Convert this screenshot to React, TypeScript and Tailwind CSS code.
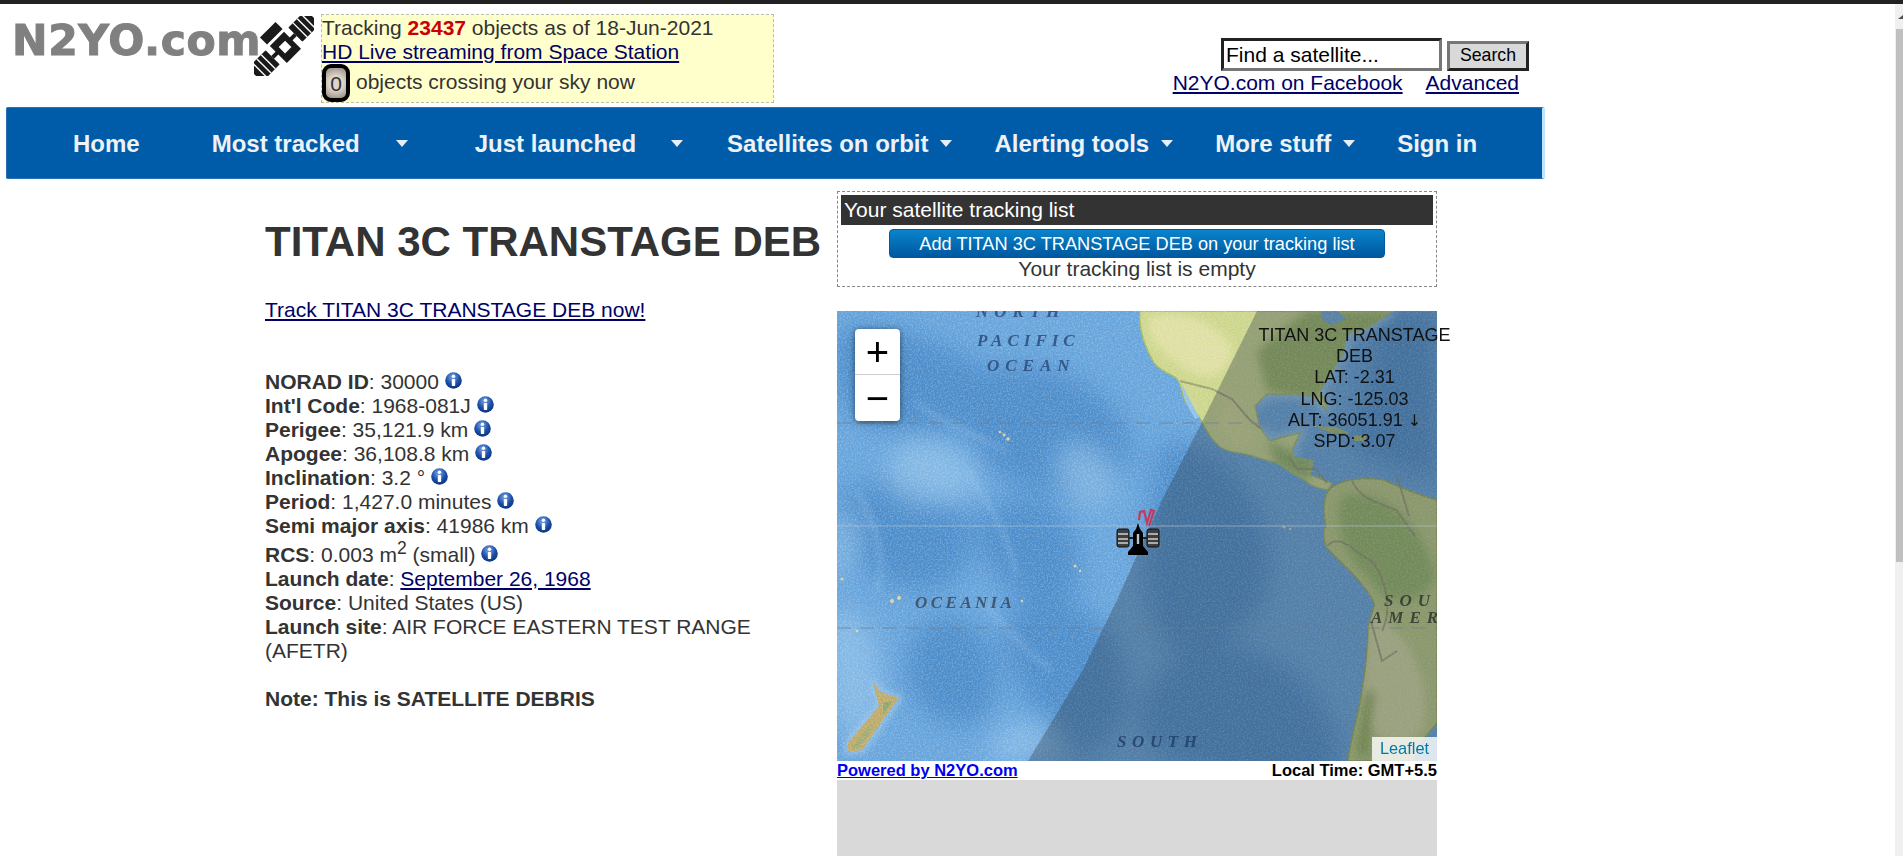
import React from "react";

const F = "[font-family:'Liberation_Sans',Arial,sans-serif]";

function Info() {
  return (
    <svg width="17" height="17" viewBox="0 0 17 17" className="inline-block ml-[6px] align-[0px]">
      <defs>
        <radialGradient id="ig" cx="45%" cy="30%" r="75%">
          <stop offset="0%" stopColor="#7fa8e8" />
          <stop offset="55%" stopColor="#1c4fa8" />
          <stop offset="100%" stopColor="#0b2f78" />
        </radialGradient>
      </defs>
      <circle cx="8.5" cy="8.5" r="8.3" fill="url(#ig)" />
      <circle cx="8.5" cy="4.3" r="1.7" fill="#fff" />
      <rect x="6.8" y="7" width="3.4" height="7" rx="0.8" fill="#fff" />
    </svg>
  );
}

function Caret({ className }: { className: string }) {
  return (
    <svg width="12" height="7" viewBox="0 0 12 7" className={className}>
      <path d="M0 0H12L6 7Z" fill="#e8eef5" />
    </svg>
  );
}

function Logo() {
  return (
    <svg width="60" height="60" viewBox="0 0 60 60" className="shrink-0">
      <g transform="translate(30 30) rotate(-45)" fill="#1a1a1a">
        <rect x="-41" y="-10" width="25" height="20" rx="1" />
        <rect x="16" y="-10" width="25" height="20" rx="1" />
        <rect x="-16" y="-2" width="8" height="4" />
        <rect x="8" y="-2" width="8" height="4" />
        <path d="M-10 -10H10V14H-10Z" />
        <path d="M-11 -23H11V-13H-11Z" />
        <rect x="-4.5" y="-3" width="9" height="9" fill="#fff" />
        <g fill="#fff">
          <rect x="-35" y="-10" width="1.4" height="20" />
          <rect x="-29" y="-10" width="1.4" height="20" />
          <rect x="-23" y="-10" width="1.4" height="20" />
          <rect x="22" y="-10" width="1.4" height="20" />
          <rect x="28" y="-10" width="1.4" height="20" />
          <rect x="34" y="-10" width="1.4" height="20" />
        </g>
      </g>
    </svg>
  );
}

const NA = "M303 0C301 20 309 38 317 52C325 62 336 63 341 69C346 78 345 86 349 92C356 98 362 104 365 111C370 122 376 130 383 136C394 143 402 141 412 144C424 148 432 150 440 152C448 158 460 165 467 169C475 176 482 178 491 179L495 172L484 168L473 164L476 150L456 146L456 137L463 122L450 125L433 130L423 117L418 95L430 83L453 83L476 85L483 92L491 100L483 80L493 63L506 43L510 23L530 17L556 0Z";
const SA = "M491 180C500 170 520 165 547 169C562 176 582 184 600 189V412C590 425 580 432 577 450H511C513 430 520 410 524 385C530 350 531 330 531 316C535 300 538 295 537 292C528 272 510 258 489 236C486 225 486 218 489 216C486 200 486 190 491 180Z";

function MapArt() {
  return (
    <svg viewBox="0 0 600 450" width="600" height="450" className="block">
      <defs>
        <filter id="speck" x="0" y="0" width="100%" height="100%">
          <feTurbulence type="fractalNoise" baseFrequency="0.6" numOctaves="2" seed="4" />
          <feColorMatrix values="0 0 0 0 1  0 0 0 0 1  0 0 0 0 1  1.8 0 0 0 -0.7" />
        </filter>
        <filter id="bl"><feGaussianBlur stdDeviation="13" /></filter>
        <filter id="bs"><feGaussianBlur stdDeviation="4" /></filter>
        <filter id="bm"><feGaussianBlur stdDeviation="3" /></filter>
        <filter id="b1"><feGaussianBlur stdDeviation="0.6" /></filter>
        <clipPath id="mapc"><rect width="600" height="450" /></clipPath>
        <clipPath id="landc"><path d={NA} /><path d={SA} /></clipPath>
      </defs>
      <g clipPath="url(#mapc)">
        <rect width="600" height="450" fill="#66a4dc" />
        <g filter="url(#bl)" fill="#3f82c3" opacity="0.7">
          <path d="M0 20C50 10 120 30 160 70S120 130 60 120S-10 70 0 20Z" />
          <path d="M140 60C200 40 270 70 290 120S260 190 200 180S110 110 140 60Z" />
          <path d="M40 170C90 160 150 200 130 250S40 280 10 240S0 180 40 170Z" />
          <path d="M170 190C220 180 250 220 240 270S170 290 150 250S140 200 170 190Z" />
          <path d="M90 310C120 290 170 330 160 380S100 420 80 390S70 330 90 310Z" />
          <path d="M190 290C240 280 300 320 280 380S200 420 180 370S160 310 190 290Z" />
          <path d="M340 130C390 140 420 180 430 230S420 320 370 340S300 290 310 220S310 130 340 130Z" />
          <path d="M350 340C410 320 480 360 500 430S400 470 340 450S300 370 350 340Z" />
          <path d="M540 0H600V170C570 160 530 150 510 130C530 90 530 40 540 0Z" />
          <path d="M270 340C300 370 300 420 240 450H190Z" />
        </g>
        <g filter="url(#bl)" fill="#9ecbee" opacity="0.55">
          <path d="M70 130C120 120 170 170 120 190S20 170 70 130Z" />
          <path d="M230 130C270 130 300 170 270 190S200 160 230 130Z" />
          <path d="M-10 300C30 290 50 340 40 400S-20 430 -10 300Z" />
          <path d="M160 420C200 400 240 420 230 450H150Z" />
          <path d="M0 200C30 190 30 240 10 260S-10 230 0 200Z" />
        </g>
        <g fill="none" stroke="#bcdcf3" strokeWidth="4" opacity="0.28" filter="url(#bm)">
          <path d="M78 90C100 110 130 120 170 140" />
          <path d="M20 180C40 215 50 250 40 280" />
          <path d="M130 160C150 190 170 220 180 265" />
          <path d="M150 295C170 320 190 340 215 360" />
        </g>
        <g fill="none" stroke="#a9d2ef" strokeWidth="9" opacity="0.7" filter="url(#bs)">
          <path d="M418 95L430 83L453 83L476 85L483 92L491 100L483 80L493 63L506 43L510 23L530 17L556 0" />
          <path d="M423 117L433 130L450 125L463 122L456 137L456 146" />
        </g>
        <path d={NA} fill="#ccd68a" />
        <path d={SA} fill="#bcc97c" />
        <g clipPath="url(#landc)">
          <g filter="url(#bs)">
            <path d="M312 6C340 -4 385 10 396 40C392 62 370 74 348 58C325 40 308 30 312 6Z" fill="#e0e0a4" opacity="0.9" />
            <path d="M470 0H560L500 60L480 90L430 80L420 40Z" fill="#92ad58" opacity="0.9" />
            <path d="M395 80L420 130L400 140L380 110Z" fill="#d8d890" opacity="0.7" />
            <path d="M430 130L480 150L470 170L440 155Z" fill="#8aaa58" opacity="0.85" />
            <path d="M505 185C540 175 585 205 598 265C585 300 545 295 530 265C508 245 495 210 505 185Z" fill="#90b05c" opacity="0.85" />
            <path d="M532 300C560 310 600 360 585 420C560 445 528 430 526 380Z" fill="#dadba0" opacity="0.8" />
            <path d="M520 440L530 380L538 380L530 450Z" fill="#8fa84e" />
          </g>
        </g>
        <path d={NA} fill="none" stroke="#9cb866" strokeWidth="1.4" filter="url(#b1)" />
        <path d={SA} fill="none" stroke="#98a856" strokeWidth="1.4" filter="url(#b1)" />
        <path d="M344 72L362 106L358 108L349 92Z" fill="#8fc2ea" />
        <path d="M484 0H500L510 8L494 14L484 8Z" fill="#6ea7d4" />
        <path d="M476 115L498 116L513 122L495 122Z" fill="#a6b56a" />
        <path d="M516 125L530 124L528 130L518 130Z" fill="#a6b56a" />
        <g fill="none" stroke="#8f8a6a" strokeWidth="2" opacity="0.7" filter="url(#b1)">
          <path d="M343 70L375 78L395 88L412 108L423 117" />
          <path d="M452 146L460 158L478 158L490 172" />
          <path d="M515 170C525 190 540 190 560 200L578 225" />
          <path d="M490 235C505 220 520 245 535 250C550 270 555 300 545 320" />
          <path d="M534 310L545 350L560 340" />
          <path d="M560 165L572 205" />
        </g>
        <path d="M36 371L44 381L62 387L48 406L44 412L25 439L11 441L11 432L33 406L42 395Z" fill="#a9d0ee" opacity="0.5" stroke="#a9d0ee" strokeWidth="7" filter="url(#bm)" />
        <path d="M36 371L44 381L62 387L48 406L44 412L25 439L11 441L11 432L33 406L42 395Z" fill="#bda968" />
        <path d="M46 392L56 390L46 404Z" fill="#8fa66e" />
        <path d="M15 436L30 418L38 410L32 424L20 438Z" fill="#9eab70" />
        <g fill="#e2cf9a">
          <circle cx="171" cy="128" r="1.8" /><circle cx="167" cy="124" r="1.4" /><circle cx="163" cy="121" r="1.2" />
          <circle cx="238" cy="255" r="1.5" /><circle cx="243" cy="260" r="1.2" /><circle cx="447" cy="216" r="1.5" /><circle cx="453" cy="218" r="1.3" />
          <circle cx="55" cy="290" r="2" /><circle cx="62" cy="287" r="2" /><circle cx="5" cy="268" r="1.5" />
          <circle cx="20" cy="320" r="1.3" /><circle cx="185" cy="290" r="1.2" />
        </g>
        <rect width="600" height="450" filter="url(#speck)" opacity="0.32" />
        <path d="M420 0L365 111L325 189L280 289L246 359L191 450H600V0Z" fill="#2f3c4a" opacity="0.35" />
        <g fontFamily="'Liberation Serif', serif" fontStyle="italic" fontWeight="700" fontSize="17" fill="#2c4c7c" opacity="0.85">
          <text x="139" y="6" letterSpacing="6">NORTH</text>
          <text x="140" y="35" letterSpacing="5">PACIFIC</text>
          <text x="150" y="60" letterSpacing="6">OCEAN</text>
          <text x="78" y="297" fill="#3a4a5c" letterSpacing="3.4">OCEANIA</text>
          <text x="280" y="436" fill="#21406a" letterSpacing="5.6">SOUTH</text>
          <text x="547" y="295" fill="#2f382c" letterSpacing="6">SOUTH</text>
          <text x="534" y="312" fill="#2f382c" letterSpacing="6">AMERICA</text>
        </g>
        <g stroke="#6f7f8f" strokeWidth="1.2" strokeDasharray="14 9" opacity="0.75">
          <path d="M0 112H600" />
          <path d="M0 317H600" />
        </g>
        <path d="M0 215H600" stroke="#b9c8d4" strokeWidth="1" opacity="0.6" />
        <g transform="translate(301 227)">
          <path d="M-2 -9L0 -15L2 -9L5 -5V8L10 14V17H-10V14L-5 8V-5Z" fill="#000" />
          <rect x="-21" y="-9" width="12" height="18" rx="2" fill="#3e3e3e" stroke="#111" />
          <rect x="9" y="-9" width="12" height="18" rx="2" fill="#3e3e3e" stroke="#111" />
          <path d="M-20 -4H-10M-20 1H-10M-20 5H-10M10 -4H20M10 1H20M10 5H20" stroke="#cfcfcf" strokeWidth="1.3" />
          <path d="M-9 0H-5M5 0H9" stroke="#222" strokeWidth="2" />
          <rect x="-1.2" y="-4" width="2.4" height="10" fill="#b9c4cc" />
          <path d="M1 -18L2 -26L6 -27L9 -15L13 -28L16 -27L11 -12" fill="none" stroke="#c23a5e" strokeWidth="2.2" />
        </g>
      </g>
    </svg>
  );
}

function NavLink({ children, className }: { children: React.ReactNode; className: string }) {
  return <a className={`font-bold text-[24px] text-[#eef2f7] whitespace-nowrap ${className}`}>{children}</a>;
}

function Row({ label, children, info = true }: { label: string; children: React.ReactNode; info?: boolean }) {
  return (
    <div>
      <b>{label}</b>: {children}
      {info && <Info />}
    </div>
  );
}

export default function App() {
  return (
    <div className={`h-[856px] w-full overflow-hidden bg-white flex flex-col text-[21px] text-[#333] ${F}`}>
      <div className="h-1 shrink-0 bg-[#222]" />
      <div className="flex flex-1 min-h-0">
        <div className="flex-1 min-w-0">
          <div className="w-[1543px] h-[103px] flex relative">
            <div className="flex items-start w-[321px] shrink-0">
              <span className="[font-family:'DejaVu_Sans',sans-serif] font-bold text-[42.5px] leading-none text-[#808080] [-webkit-text-stroke:1px_#808080] ml-[12px] mt-[16px] w-[242px] tracking-[0.6px] whitespace-nowrap blur-[0.5px]">N2YO.com</span>
              <div className="mt-[12px]"><Logo /></div>
            </div>
            <div className="w-[453px] h-[89px] mt-[10px] bg-[#ffffcc] border border-dashed border-[#bbb] leading-[25px]">
              <div>Tracking <b className="text-[#cc0000]">23437</b> objects as of 18-Jun-2021</div>
              <a className="underline text-[#000066] block -mt-[1px]">HD Live streaming from Space Station</a>
              <div className="flex items-center">
                <span className="w-[28px] h-[38px] border-[4px] border-black rounded-[9px] bg-[radial-gradient(circle,#ddd5cb_40%,#8f847c)] flex items-center justify-center text-[#333] mr-[6px]">0</span>
                <span className="-mt-[3px]">objects crossing your sky now</span>
              </div>
            </div>
            <div className="ml-auto pr-[14px] flex flex-col items-end">
              <div className="flex items-end mt-[34px] gap-[5px]">
                <div className="w-[221px] h-[33px] border-[3px] border-t-[#222] border-l-[#222] border-r-[#767676] border-b-[#767676] text-black flex items-center pl-[2px]">Find a satellite...</div>
                <button className="w-[82px] h-[30px] border-[3px] border-t-[#767676] border-l-[#767676] border-r-[#222] border-b-[#222] bg-[#d9d9d9] text-[17.7px] text-black leading-none">Search</button>
              </div>
              <div className="flex gap-[23px] pr-[10px] text-[#000066] leading-[24px]">
                <a className="underline">N2YO.com on Facebook</a>
                <a className="underline">Advanced</a>
              </div>
            </div>
          </div>

          <div className="ml-[6px] w-[1539px] h-[72px] bg-[#005ca8] rounded-[2px] border border-[#2a72b5] border-r-[3px] border-r-[#c0e4ff] pt-[1px] flex items-center">
            <NavLink className="ml-[66px]">Home</NavLink>
            <NavLink className="ml-[72px]">Most tracked</NavLink>
            <Caret className="ml-[36px]" />
            <NavLink className="ml-[67px]">Just launched</NavLink>
            <Caret className="ml-[35px]" />
            <NavLink className="ml-[44px]">Satellites on orbit</NavLink>
            <Caret className="ml-[12px]" />
            <NavLink className="ml-[42px]">Alerting tools</NavLink>
            <Caret className="ml-[12px]" />
            <NavLink className="ml-[42px]">More stuff</NavLink>
            <Caret className="ml-[12px]" />
            <NavLink className="ml-[42px]">Sign in</NavLink>
          </div>

          <div className="flex">
            <div className="w-[837px] shrink-0 pl-[265px] pr-[16px]">
              <h1 className="text-[42px] font-bold leading-[46px] mt-[40px] whitespace-nowrap">TITAN 3C TRANSTAGE DEB</h1>
              <a className="block underline text-[#000066] leading-[24px] mt-[33px]">Track TITAN 3C TRANSTAGE DEB now!</a>
              <div className="leading-[24px] mt-[48px]">
                <Row label="NORAD ID">30000</Row>
                <Row label="Int'l Code">1968-081J</Row>
                <Row label="Perigee">35,121.9 km</Row>
                <Row label="Apogee">36,108.8 km</Row>
                <Row label="Inclination">3.2 °</Row>
                <Row label="Period">1,427.0 minutes</Row>
                <Row label="Semi major axis">41986 km</Row>
                <div className="pt-[5px]">
                  <b>RCS</b>: 0.003 m<sup className="text-[17.5px] leading-none align-baseline relative -top-[8px]">2</sup> (small)<Info />
                </div>
                <Row label="Launch date" info={false}><a className="underline text-[#000066]">September 26, 1968</a></Row>
                <Row label="Source" info={false}>United States (US)</Row>
                <Row label="Launch site" info={false}>AIR FORCE EASTERN TEST RANGE (AFETR)</Row>
                <div className="mt-[24px] font-bold">Note: This is SATELLITE DEBRIS</div>
              </div>
            </div>

            <div className="w-[600px] shrink-0 flex flex-col">
              <div className="mt-[12px] h-[96px] border border-dashed border-[#888] px-[3px] pt-[3px] text-center">
                <div className="h-[30px] bg-[#333] text-white text-left pl-[3px] leading-[30px]">Your satellite tracking list</div>
                <button className="block mx-auto mt-[4px] w-[496px] h-[29px] rounded-[4px] border border-[#005a9e] bg-gradient-to-b from-[#0a84cc] to-[#00589f] text-white text-[18.2px] leading-none pt-[2px]">Add TITAN 3C TRANSTAGE DEB on your tracking list</button>
                <div className="leading-[24px] -mt-[1px]">Your tracking list is empty</div>
              </div>
              <div className="mt-[24px] h-[450px] relative">
                <MapArt />
                <div className="absolute left-[18px] top-[18px] w-[45px] h-[92px] bg-white rounded-[4px] shadow-[0_1px_6px_rgba(0,0,0,0.55)] flex flex-col text-black">
                  <div className="h-[46px] border-b border-[#ccc] flex items-center justify-center text-[40px] font-normal leading-none">+</div>
                  <div className="flex-1 flex items-center justify-center text-[40px] leading-none">−</div>
                </div>
                <div className="absolute left-[421px] top-[14px] w-[193px] text-center text-[18px] leading-[21.2px] text-[#111]">
                  TITAN 3C TRANSTAGE DEB<br />LAT: -2.31<br />LNG: -125.03<br />ALT: 36051.91 <span className="[font-family:'DejaVu_Sans',sans-serif] text-[16px] leading-none">↓</span><br />SPD: 3.07
                </div>
                <div className="absolute right-0 bottom-0 h-[24px] w-[65px] bg-white/80 text-[16.4px] leading-[23px] text-center text-[#0078a8]">Leaflet</div>
              </div>
              <div className="h-[19px] flex justify-between items-start text-[16.5px] font-bold text-black leading-[18px]">
                <a className="underline text-[#0000ee]">Powered by N2YO.com</a>
                <span>Local Time: GMT+5.5</span>
              </div>
              <div className="h-[100px] bg-[#d9d9d9]" />
            </div>
          </div>
        </div>

        <div className="w-2 shrink-0 bg-[#f0f0f0] pl-px flex flex-col">
          <div className="h-[25px] flex items-center justify-end">
            <svg width="5" height="4" viewBox="0 0 5 4"><path d="M0 4L5 0V4Z" fill="#505050" /></svg>
          </div>
          <div className="h-[533px] bg-[#c0c0c0]" />
        </div>
      </div>
    </div>
  );
}
